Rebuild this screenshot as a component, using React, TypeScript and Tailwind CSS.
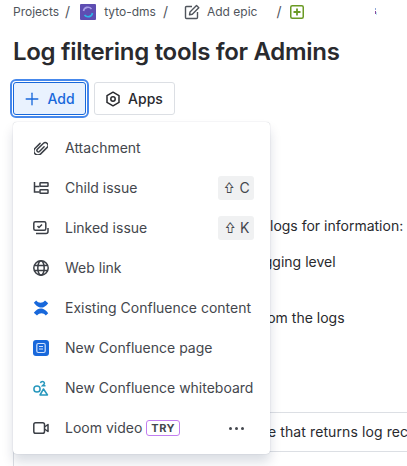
import { Plus } from "lucide-react";
import type { ReactNode } from "react";

const sans = "font-['Inter','Noto_Sans',sans-serif]";

function ConfluenceIcon() {
  const band = "M.8 2.800 3.200.6c2.300 3 6.300 3 8.800 0l3.200 2.600C12.500 6.800 9.500 8.200 7 7.400 4.500 6.800 2.500 5 .8 2.800z";
  return (
    <svg width="16" height="16" viewBox="0 0 16 16" fill="#1868db">
      <path d={band} />
      <path d={band} transform="rotate(180 8 8)" />
    </svg>
  );
}

const items: { label: string; icon: ReactNode; keys?: string; badge?: boolean }[] = [
  {
    label: "Attachment",
    icon: (
      <svg width="14" height="14" viewBox="0 0 16 16" fill="none" stroke="#3b3f46" strokeWidth="1.700" strokeLinecap="round">
        <path transform="rotate(45 8 8)" d="M9.500 4.500V12a1.700 1.700 0 0 1-3.400 0V2.500a3.200 3.200 0 0 1 6.400 0V13a4.500 4.500 0 0 1-9 0V5" />
      </svg>
    ),
  },
  {
    label: "Child issue",
    keys: "C",
    icon: (
      <svg width="16" height="16" viewBox="0 0 16 16" fill="none" stroke="#3b3f46" strokeWidth="1.500">
        <path d="M1.500 2v10h5M1.500 6.500h5" />
        <rect x="7" y="2.800" width="8" height="3.500" rx=".5" />
        <rect x="7" y="9.800" width="8" height="3.500" rx=".5" />
      </svg>
    ),
  },
  {
    label: "Linked issue",
    keys: "K",
    icon: (
      <svg width="16" height="16" viewBox="0 0 16 16" fill="none" stroke="#3b3f46" strokeWidth="1.500">
        <rect x=".8" y="1.800" width="12" height="8.500" rx="1.500" />
        <path d="m4.500 6 1.500 1.500L9 4.500M3 13.500h10c1.200 0 2-.8 2-2V8" />
      </svg>
    ),
  },
  {
    label: "Web link",
    icon: (
      <svg width="16" height="16" viewBox="0 0 16 16" fill="none" stroke="#3b3f46" strokeWidth="1.500">
        <circle cx="8" cy="8" r="7.200" />
        <ellipse cx="8" cy="8" rx="3.200" ry="7.200" />
        <path d="M1 5.500h14M1 10.500h14" />
      </svg>
    ),
  },
  { label: "Existing Confluence content", icon: <ConfluenceIcon /> },
  {
    label: "New Confluence page",
    icon: (
      <svg width="16" height="16" viewBox="0 0 16 16">
        <rect width="16" height="16" rx="3" fill="#1868db" />
        <rect x="3.800" y="3.500" width="8.400" height="9" rx="1.500" fill="none" stroke="#cfe1fd" strokeWidth="1.200" />
        <path d="M6 6.500h4M6 9h4" stroke="#cfe1fd" strokeWidth="1.200" />
      </svg>
    ),
  },
  {
    label: "New Confluence whiteboard",
    icon: (
      <svg width="16" height="16" viewBox="0 0 16 16" fill="none" stroke="#2898bd" strokeWidth="1.500">
        <circle cx="4" cy="9" r="3.100" />
        <path d="M7.500 3.200c.2-1.100 1-1.700 2-1.700 1.900 0 2.600 2 1.200 3.100L9.500 5.800h3" />
        <path d="M10.500 9 14.500 15H7z" strokeLinejoin="round" />
      </svg>
    ),
  },
  {
    label: "Loom video",
    badge: true,
    icon: (
      <svg width="16" height="16" viewBox="0 0 16 16" fill="none" stroke="#3b3f46" strokeWidth="1.500">
        <rect x=".8" y="2.800" width="10.700" height="10.500" rx="1.800" />
        <path d="M11.500 7 15 4.500v7L11.500 9" strokeLinejoin="round" />
      </svg>
    ),
  },
];

export default function App() {
  return (
    <div className={`${sans} relative flex h-[466px] w-[407px] flex-col overflow-hidden bg-white text-[#292d33]`}>
      <div className="flex h-6 shrink-0 items-center whitespace-nowrap pl-[13px] text-xs text-[#50555c]">
        <span>Projects</span>
        <span className="ml-[6px] text-sm">/</span>
        <svg className="ml-[10px]" width="16" height="16" viewBox="0 0 16 16">
          <rect width="16" height="16" rx="1" fill="#5e4db2" />
          <path d="M3.500 7a4.500 4.500 0 0 1 8-2" fill="none" stroke="#a9a0e8" strokeWidth="1.600" />
          <path d="M12.500 9a4.500 4.500 0 0 1-8 2" fill="none" stroke="#2fb6e8" strokeWidth="1.600" />
        </svg>
        <span className="ml-2">tyto-dms</span>
        <span className="ml-[7px] text-sm">/</span>
        <svg className="ml-[16px]" width="16" height="16" viewBox="0 0 16 16" fill="none" stroke="#50555c" strokeWidth="1.400">
          <path d="M8 2.500H2.500a1 1 0 0 0-1 1v10a1 1 0 0 0 1 1h10a1 1 0 0 0 1-1V8" />
          <path d="M5.500 10.800 6 8l6.500-6.500 2.300 2.300L8.300 10.300z" strokeLinejoin="round" />
        </svg>
        <span className="ml-[7px]">Add epic</span>
        <span className="ml-[19px] text-sm">/</span>
        <svg className="ml-[9px]" width="14" height="14" viewBox="0 0 14 14" fill="none">
          <rect x=".75" y=".75" width="12.500" height="12.500" rx="1.500" stroke="#6a9a23" strokeWidth="1.500" />
          <path d="M7 3.500v7M3.500 7h7" stroke="#6a9a23" strokeWidth="1.800" />
        </svg>
        <svg className="ml-[71px]" width="2" height="8" viewBox="0 0 2 8">
          <path d="M0 0h1v2H0z" fill="#8fa8d8" />
          <path d="M0 3h1v3H0z" fill="#8a4a9c" />
          <path d="M1 4h1v3H1z" fill="#bfe6f5" />
        </svg>
      </div>

      <h1 className="mt-[12px] shrink-0 whitespace-nowrap pl-[13px] text-2xl leading-8 font-semibold tracking-[-0.3px] text-[#292a2e]">
        Log filtering tools for Admins
      </h1>

      <div className="mt-[14px] flex shrink-0 items-center gap-2 pl-[13px]">
        <button className="flex h-[33px] w-[73px] items-center justify-center gap-[5px] rounded-[3px] border border-[#1868db] bg-[#e9f2fe] pr-[2px] text-sm font-[450] text-[#1868db] outline-2 outline-offset-1 outline-[#4688ec]">
          <Plus size={20} strokeWidth={1.600} />
          Add
        </button>
        <button className="flex h-[33px] w-[81px] items-center justify-center gap-[7px] rounded-[3px] border border-[#dcdfe4] bg-white pr-[1px] text-sm font-[450] text-[#292a2e]">
          <svg width="16" height="16" viewBox="0 0 16 16" fill="none" stroke="#292a2e" strokeWidth="1.500">
            <path d="M8 1.200 14 4.600v6.800L8 14.800 2 11.400V4.600z" strokeLinejoin="round" />
            <circle cx="8" cy="8" r="2.200" />
          </svg>
          Apps
        </button>
      </div>

      <div className="mt-[101px] flex shrink-0 flex-col text-sm leading-5 whitespace-nowrap text-[#292a2e]">
        <p className="pl-[270px]">logs for information:</p>
        <p className="mt-4 pl-[252px]">logging level</p>
        <p className="mt-9 pl-[257px]">from the logs</p>
      </div>

      <div className="mt-[84px] ml-[13px] shrink-0 border-y border-l border-[#dcdfe4] py-[9px] pl-[254px] text-sm leading-5 tracking-[0.1px] whitespace-nowrap text-[#292a2e]">
        e that returns log rec
      </div>
      <div className="ml-[13px] flex-1 border-l border-[#dcdfe4]" />

      <div className="absolute top-[122px] left-[13px] w-[257px] rounded-[4px] bg-white py-[6px] shadow-[0_8px_12px_rgba(9,30,66,0.15),0_0_1px_rgba(9,30,66,0.31)]">
        {items.map((item) => (
          <div key={item.label} className="flex h-10 items-center pr-4 pl-[20px] text-sm whitespace-nowrap text-[#44474d]">
            <span className="flex w-4 items-center justify-center">{item.icon}</span>
            <span className="ml-4">{item.label}</span>
            {item.badge && (
              <span className="ml-1 rounded-[3px] border border-[#c27ef0] px-1 text-[11px] leading-[14px] font-bold tracking-[0.5px] text-[#44474d]">
                TRY
              </span>
            )}
            {item.badge && (
              <span className="ml-auto flex gap-[3px] pr-[10px]">
                <i className="size-[3px] rounded-full bg-[#44474d]" />
                <i className="size-[3px] rounded-full bg-[#44474d]" />
                <i className="size-[3px] rounded-full bg-[#44474d]" />
              </span>
            )}
            {item.keys && (
              <span className="ml-auto flex h-6 w-9 items-center justify-center gap-[3px] rounded-[3px] bg-[#f0f1f2] text-sm text-[#44474d]">
                <span className="inline-block scale-x-75">⇧</span>
                {item.keys}
              </span>
            )}
          </div>
        ))}
      </div>
    </div>
  );
}
